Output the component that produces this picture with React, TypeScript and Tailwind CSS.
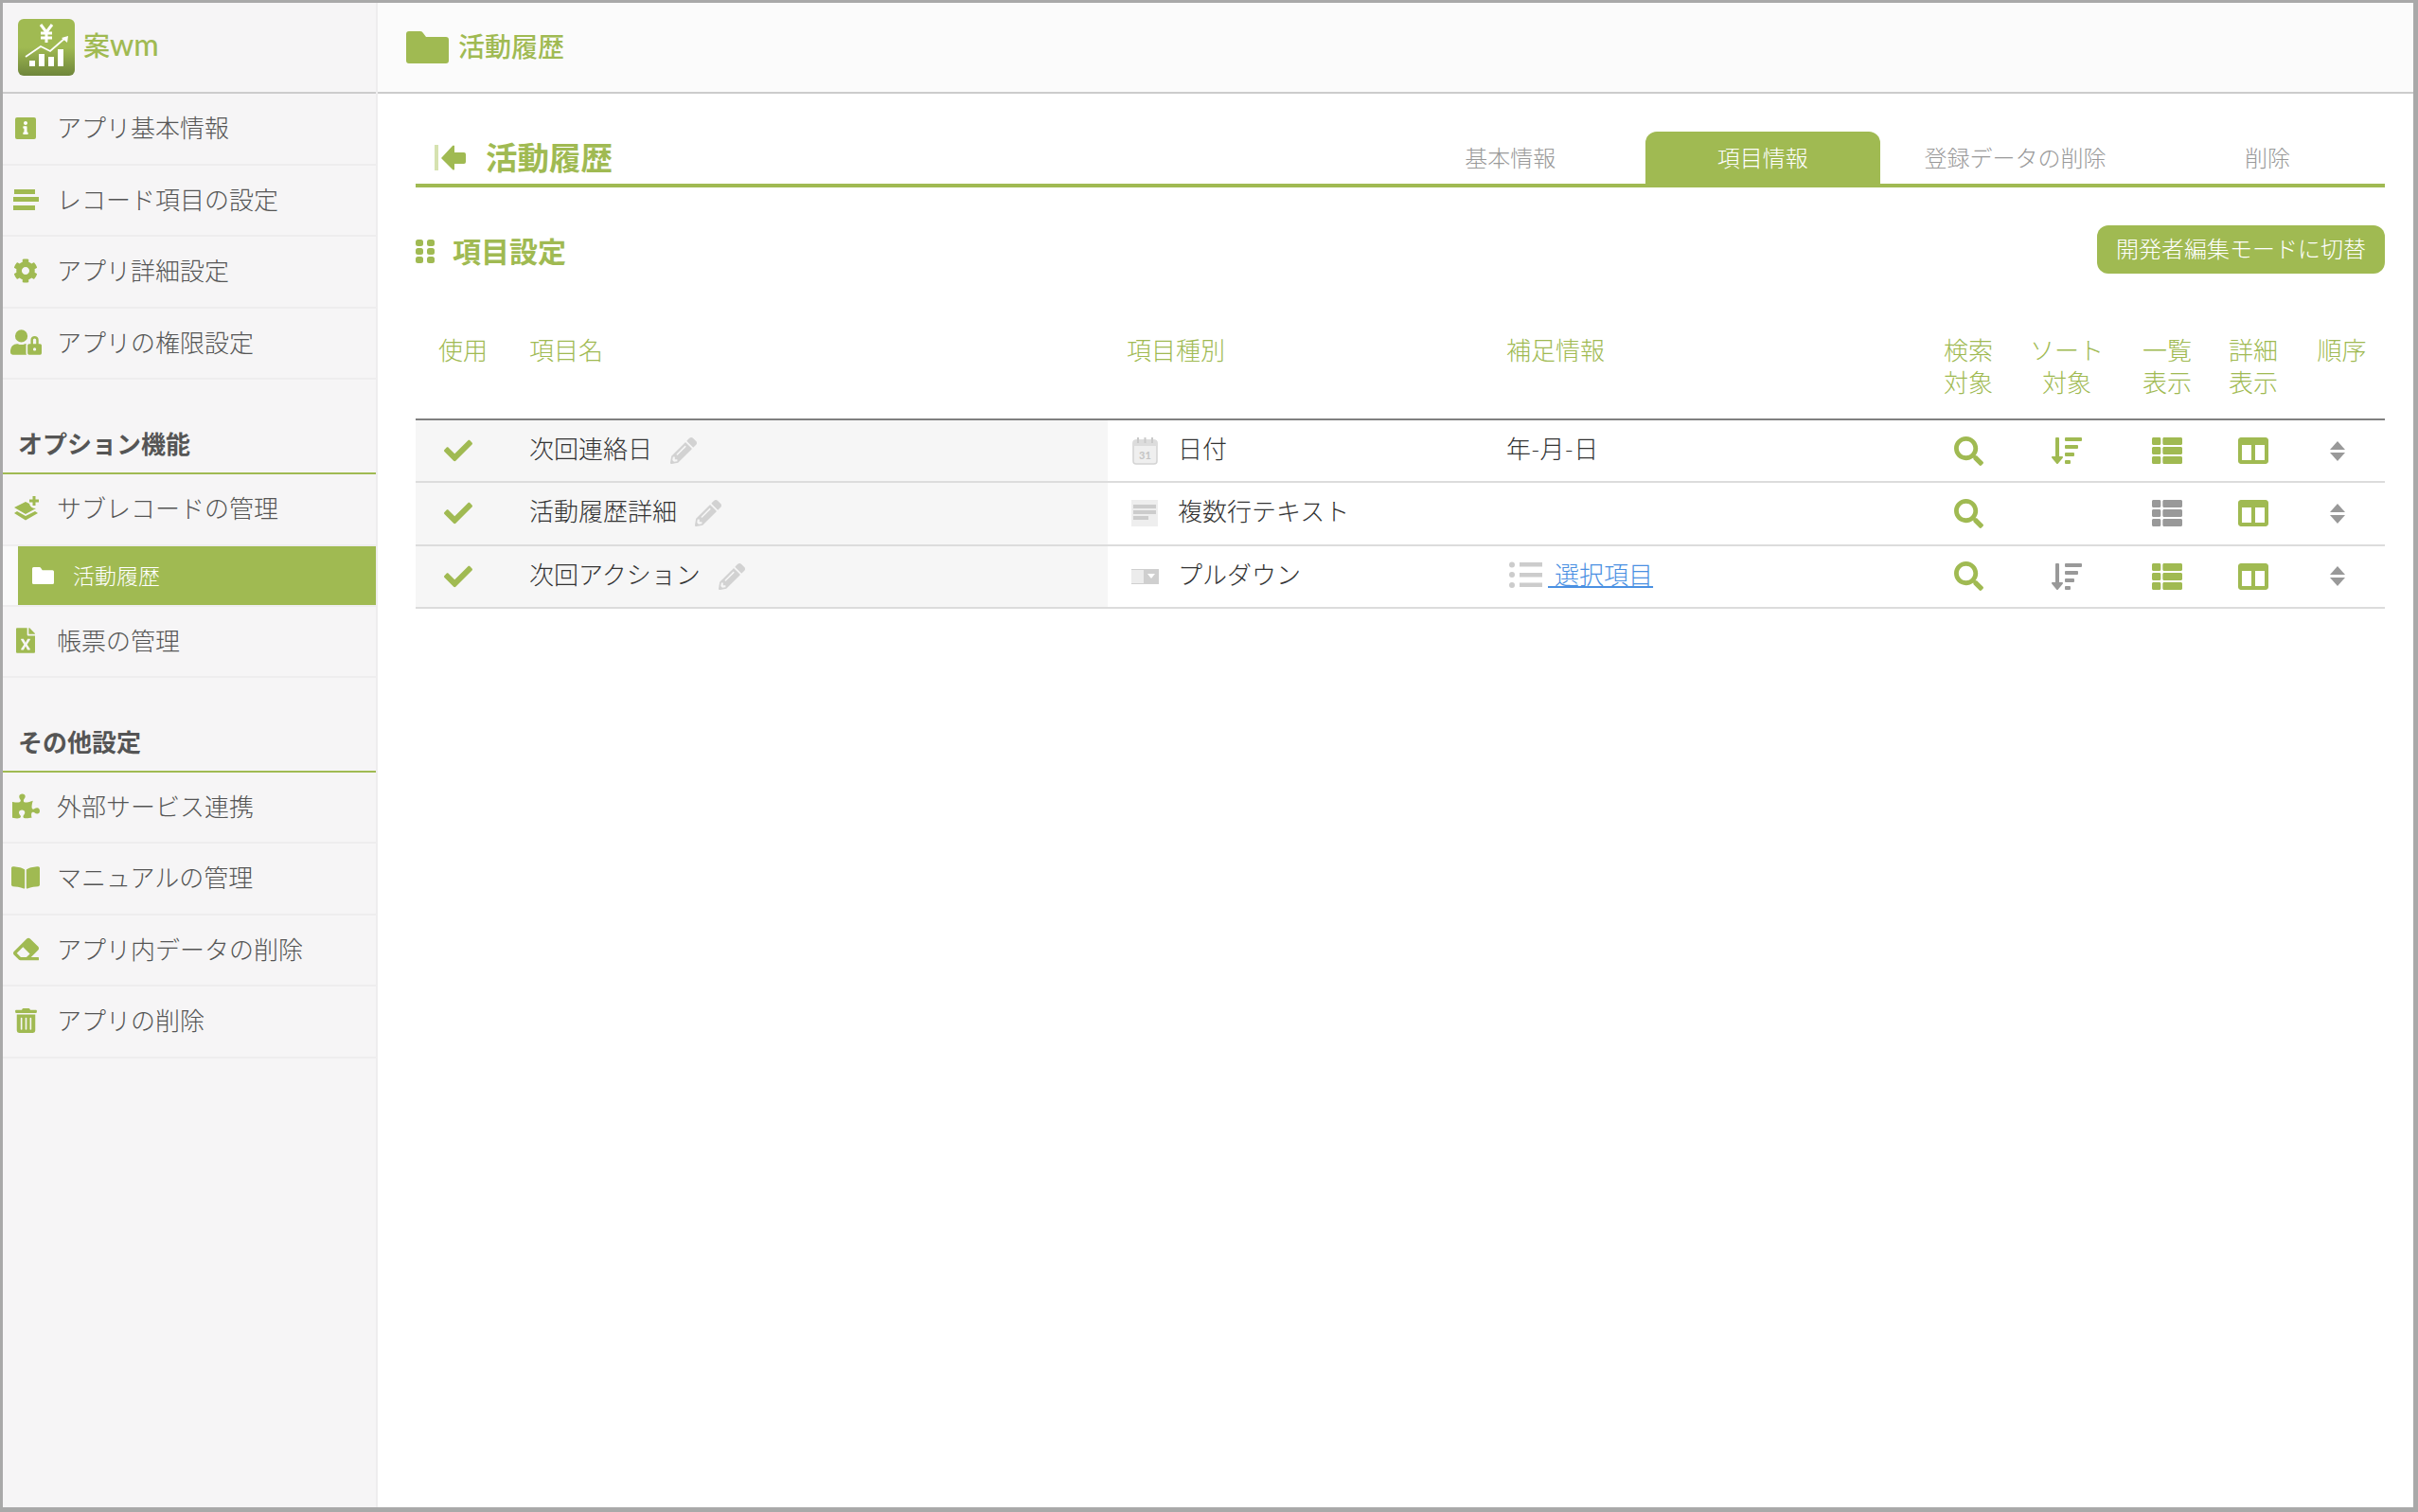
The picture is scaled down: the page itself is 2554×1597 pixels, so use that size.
import React from "react";
import {
  FaCheck, FaPencilAlt, FaSearch, FaSortAmountDown, FaThList, FaColumns,
  FaCog, FaUserLock, FaFileExcel, FaPuzzlePiece, FaBookOpen, FaEraser, FaTrashAlt, FaInfo,
} from "react-icons/fa";

const GRID = "grid grid-cols-[102px_629px_421px_449px_78px_130px_82px_100px_89px] items-center";
const ROW = GRID + " h-[66.3px] border-b-2 border-[#dcdcdc]";

function FolderIcon({ className }: { className: string }) {
  return (
    <svg viewBox="0 0 45 34" preserveAspectRatio="none" className={className} fill="currentColor">
      <path d="M3 0 H15 Q17 0 18 2 L21 6 H42 Q45 6 45 9 V31 Q45 34 42 34 H3 Q0 34 0 31 V3 Q0 0 3 0 Z" />
    </svg>
  );
}
function InfoIcon() {
  return (
    <span className="flex h-[23px] w-[22px] items-center justify-center rounded-[2px] bg-[#a0ba52] text-white">
      <FaInfo className="h-[14px] w-[14px]" />
    </span>
  );
}
function BarsIcon() {
  return (
    <span className="flex w-[27px] flex-col gap-[3.5px]">
      <span className="ml-[1px] h-[5px] w-[22px] bg-[#a0ba52]" />
      <span className="h-[5px] w-[27px] bg-[#a0ba52]" />
      <span className="h-[5px] w-[23px] bg-[#a0ba52]" />
    </span>
  );
}
function LayerPlusIcon() {
  return (
    <svg viewBox="0 0 27 26" className="h-[26px] w-[27px]" fill="#a0ba52">
      <path d="M1 12 L13 6 L17 8 Q18 13 24 13 L13 19 Z" />
      <path d="M1 18 L4 16 L13 21 L23 16 L26 18 L13 25.5 Z" />
      <path d="M20.5 0 H23.5 V3.5 H27 V6.5 H23.5 V10 H20.5 V6.5 H17 V3.5 H20.5 Z" />
    </svg>
  );
}
function BackIcon() {
  return (
    <svg viewBox="0 0 33 27" className="h-[27px] w-[33px]">
      <rect x="0" y="0" width="4" height="27" fill="#d6e2b0" />
      <path d="M7 14 L19 1 Q20 0 21 1 V8 H31 Q33 8 33 10 V18 Q33 20 31 20 H21 V26 Q20 27 19 26 Z" fill="#a0ba52" />
    </svg>
  );
}
function GripIcon() {
  return (
    <svg viewBox="0 0 20 25" className="h-[25px] w-[20px]" fill="#a0ba52">
      <rect x="0" y="0" width="8" height="7" rx="2.5" />
      <rect x="12" y="0" width="8" height="7" rx="2.5" />
      <rect x="0" y="9" width="8" height="7" rx="2.5" />
      <rect x="12" y="9" width="8" height="7" rx="2.5" />
      <rect x="0" y="18" width="8" height="7" rx="2.5" />
      <rect x="12" y="18" width="8" height="7" rx="2.5" />
    </svg>
  );
}
function CalendarIcon() {
  return (
    <svg viewBox="0 0 27 29" className="h-[29px] w-[27px]">
      <rect x="1" y="3" width="25" height="25" rx="3" fill="#efefef" stroke="#d4d4d4" strokeWidth="1.5" />
      <rect x="1" y="3" width="25" height="6" fill="#dcdcdc" />
      <rect x="5" y="0" width="2" height="6" fill="#c9c9c9" />
      <rect x="12.5" y="0" width="2" height="6" fill="#c9c9c9" />
      <rect x="20" y="0" width="2" height="6" fill="#c9c9c9" />
      <text x="13.5" y="23" fontSize="11" fontWeight="700" fill="#c4c4c4" textAnchor="middle" fontFamily="Lato, sans-serif">31</text>
    </svg>
  );
}
function TextAreaIcon() {
  return (
    <span className="flex h-[28px] w-[28px] flex-col gap-[2px] bg-[#eeeeee] px-[2px] pt-[5px]">
      <span className="h-[4px] w-full bg-[#cccccc]" />
      <span className="h-[4px] w-full bg-[#cccccc]" />
      <span className="h-[4px] w-[16px] bg-[#cccccc]" />
    </span>
  );
}
function DropdownIcon() {
  return (
    <svg viewBox="0 0 29 16" className="h-[16px] w-[29px]">
      <rect x="0" y="0" width="29" height="16" fill="#cfcfcf" />
      <rect x="0" y="1" width="13" height="14" fill="#ececec" />
      <path d="M17 5 H25 L21 10 Z" fill="#ffffff" />
    </svg>
  );
}
function OptionListIcon() {
  return (
    <svg viewBox="0 0 35 28" className="h-[28px] w-[35px]" fill="#cccccc">
      <circle cx="3" cy="3.5" r="3" />
      <circle cx="3" cy="14" r="3" />
      <circle cx="3" cy="25" r="3" />
      <rect x="11" y="1" width="24" height="4.5" />
      <rect x="11" y="12" width="24" height="4.5" />
      <rect x="11" y="22.5" width="24" height="4.5" />
    </svg>
  );
}
function OrderIcon() {
  return (
    <svg viewBox="0 0 16 21" className="h-[21px] w-[16px]" fill="#999999">
      <path d="M8 0 L16 9 H0 Z" />
      <path d="M0 12 H16 L8 21 Z" />
    </svg>
  );
}
function Logo() {
  return (
    <svg viewBox="0 0 60 60" className="h-[60px] w-[60px]">
      <defs>
        <linearGradient id="lg" x1="0" y1="0" x2="0" y2="1">
          <stop offset="0.5" stopColor="#a0ba52" />
          <stop offset="1" stopColor="#6f863b" />
        </linearGradient>
      </defs>
      <rect width="60" height="60" rx="6" fill="url(#lg)" />
      <path d="M24 6 L30 14 L36 6 M30 14 V25 M24 15 H36 M24 20 H36" stroke="#fff" strokeWidth="3" fill="none" />
      <path d="M8 40 L24 29 L34 34 L50 20" stroke="#fff" strokeWidth="1.8" fill="none" />
      <path d="M46 20 L53 18 L52 25 Z" fill="#fff" />
      <rect x="12" y="44" width="6" height="6" fill="#fff" />
      <rect x="22" y="37" width="6" height="13" fill="#fff" />
      <rect x="32" y="40" width="6" height="10" fill="#fff" />
      <rect x="42" y="32" width="6" height="18" fill="#fff" />
    </svg>
  );
}

function NavItem({ icon, label }: { icon: React.ReactNode; label: string }) {
  return (
    <div className="flex h-[75.5px] items-center border-b-2 border-[#eeedee] pb-[1px] text-[#555555]">
      <span className="flex w-[57px] shrink-0 items-center justify-center pr-[9px] text-[#a0ba52]">{icon}</span>
      <span>{label}</span>
    </div>
  );
}
function SectionHead({ label, tall }: { label: string; tall?: boolean }) {
  return (
    <div className={(tall ? "h-[100px]" : "h-[99.5px]") + " flex items-end border-b-2 border-[#a0ba52] pb-[13px] pl-[16px] font-bold text-[#555555]"}>
      {label}
    </div>
  );
}
function Head({ children, center }: { children: React.ReactNode; center?: boolean }) {
  return <div className={center ? "text-center" : ""}>{children}</div>;
}
const on = "text-[#a0ba52]";
const off = "text-[#999999]";

function Row({ name, type, typeIcon, info, sort, list }: { name: string; type: string; typeIcon: React.ReactNode; info: React.ReactNode; sort: string; list: string }) {
  return (
    <div className={ROW}>
      <div className="flex h-full items-center bg-[#f6f6f6] pl-[30px]">
        <FaCheck className="h-[30px] w-[30px] text-[#a0ba52]" />
      </div>
      <div className="flex h-full items-center gap-[19px] bg-[#f6f6f6] pl-[18px] text-[#333333]">
        <span className="pb-[4px]">{name}</span>
        <FaPencilAlt className="h-[28px] w-[28px] text-[#d2d2d2]" />
      </div>
      <div className="flex items-center text-[#333333]">
        <span className="flex w-[74px] justify-center pl-[6px] pr-[2px]">{typeIcon}</span>
        <span className="pb-[4px]">{type}</span>
      </div>
      <div className="pb-[4px] text-[#333333]">{info}</div>
      <div className="flex justify-center"><FaSearch className={"h-[31px] w-[31px] " + on} /></div>
      <div className="flex justify-center">{sort && <FaSortAmountDown className={"h-[32px] w-[32px] " + sort} />}</div>
      <div className="flex justify-center"><FaThList className={"h-[32px] w-[32px] " + list} /></div>
      <div className="flex justify-center"><FaColumns className={"h-[32px] w-[32px] " + on} /></div>
      <div className="flex justify-center pr-[11px]"><OrderIcon /></div>
    </div>
  );
}

export default function App() {
  return (
    <div className="flex h-[1597px] w-[2554px] border-b-[5px] border-l-[3px] border-r-[5px] border-t-[3px] border-[#a9a9a9] bg-white font-['Lato','Noto_Sans_CJK_JP',sans-serif] text-[26px] font-light leading-[34px]">
      <aside className="w-[396px] shrink-0 border-r-2 border-[#eeedee] bg-[#f6f5f6]">
        <div className="flex h-[96px] items-center gap-[9px] border-b-2 border-[#cccccc] pl-[16px]">
          <Logo />
          <span className="pb-[6px] text-[28px] font-medium text-[#a0ba52]">案<span className="text-[32px]">wm</span></span>
        </div>
        <NavItem icon={<InfoIcon />} label="アプリ基本情報" />
        <NavItem icon={<BarsIcon />} label="レコード項目の設定" />
        <NavItem icon={<FaCog className="h-[26px] w-[26px]" />} label="アプリ詳細設定" />
        <NavItem icon={<FaUserLock className="h-[33px] w-[33px]" />} label="アプリの権限設定" />
        <SectionHead label="オプション機能" tall />
        <NavItem icon={<LayerPlusIcon />} label="サブレコードの管理" />
        <div className="flex h-[64px] border-b-2 border-[#eeedee] bg-[#fafafa]">
          <div className="ml-[16px] flex flex-1 items-center bg-[#a0ba52] text-[23px] text-white">
            <FolderIcon className="ml-[15px] h-[18px] w-[23px]" />
            <span className="ml-[20px]">活動履歴</span>
          </div>
        </div>
        <NavItem icon={<FaFileExcel className="h-[27px] w-[20px]" />} label="帳票の管理" />
        <SectionHead label="その他設定" />
        <NavItem icon={<FaPuzzlePiece className="h-[29px] w-[29px]" />} label="外部サービス連携" />
        <NavItem icon={<FaBookOpen className="h-[30px] w-[30px]" />} label="マニュアルの管理" />
        <NavItem icon={<FaEraser className="h-[27px] w-[27px]" />} label="アプリ内データの削除" />
        <NavItem icon={<FaTrashAlt className="h-[26px] w-[23px]" />} label="アプリの削除" />
      </aside>
      <main className="min-w-0 flex-1">
        <div className="flex h-[96px] items-center border-b-2 border-[#cccccc] bg-[#fbfbfb] pl-[30px] text-[28px] font-medium text-[#a0ba52]">
          <FolderIcon className="h-[34px] w-[45px]" />
          <span className="ml-[10px] pb-[3px]">活動履歴</span>
        </div>
        <div className="ml-[40px] mr-[30px]">
          <div className="mt-[40px] flex h-[59px] items-end justify-between border-b-4 border-[#a0ba52]">
            <div className="flex items-center pb-[11px] pl-[20px] text-[33.5px] font-bold text-[#a0ba52]">
              <BackIcon />
              <span className="ml-[21px]">活動履歴</span>
            </div>
            <div className="flex h-[55px] gap-[18.6px] text-[24px] text-[#999999]">
              <div className="flex w-[248px] items-center justify-center">基本情報</div>
              <div className="flex w-[248px] items-center justify-center rounded-t-[12px] bg-[#a0ba52] text-white">項目情報</div>
              <div className="flex w-[248px] items-center justify-center">登録データの削除</div>
              <div className="flex w-[248px] items-center justify-center">削除</div>
            </div>
          </div>
          <div className="mt-[40px] flex h-[51px] items-center justify-between">
            <div className="flex items-center gap-[19px] pt-[3px] text-[30px] font-bold text-[#a0ba52]">
              <GripIcon />
              <span>項目設定</span>
            </div>
            <div className="flex h-[51px] w-[304px] items-center justify-center rounded-[12px] bg-[#a0ba52] pb-[2px] text-[24px] text-white">
              開発者編集モードに切替
            </div>
          </div>
          <div className={GRID + " mt-[64px] border-b-2 border-[#808080] pb-[21px] !items-start text-[#a0ba52]"}>
            <div className="pr-[2px] text-center">使用</div>
            <div className="pl-[18px]">項目名</div>
            <div className="pl-[20px]">項目種別</div>
            <div>補足情報</div>
            <Head center>検索<br />対象</Head>
            <Head center>ソート<br />対象</Head>
            <Head center>一覧<br />表示</Head>
            <Head center>詳細<br />表示</Head>
            <div className="pr-[2px] text-center">順序</div>
          </div>
          <Row name="次回連絡日" type="日付" typeIcon={<CalendarIcon />} info="年-月-日" sort={on} list={on} />
          <Row name="活動履歴詳細" type="複数行テキスト" typeIcon={<TextAreaIcon />} info="" sort="" list={off} />
          <Row
            name="次回アクション"
            type="プルダウン"
            typeIcon={<DropdownIcon />}
            info={
              <span className="ml-[3px] flex items-center">
                <OptionListIcon />
                <a className="ml-[6px] whitespace-pre text-[#4a90e2] underline"> 選択項目</a>
              </span>
            }
            sort={off}
            list={on}
          />
        </div>
      </main>
    </div>
  );
}
